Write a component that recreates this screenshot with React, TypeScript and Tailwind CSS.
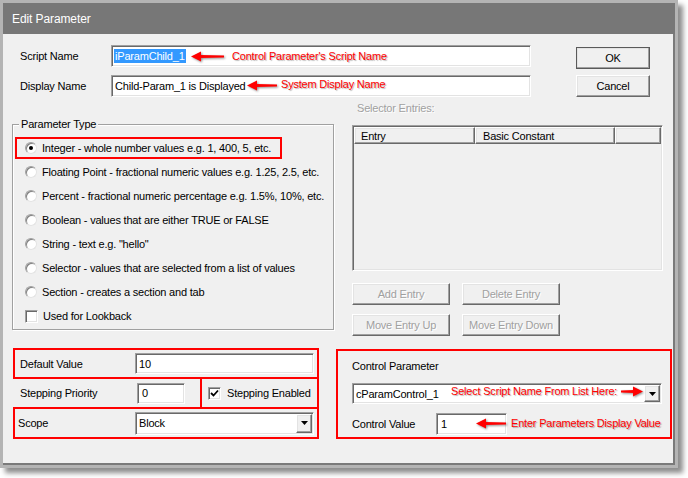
import React from 'react';

const sunken =
  'bg-white border border-t-[#a0a0a0] border-l-[#a0a0a0] border-r-white border-b-white shadow-[inset_1px_1px_0_#696969,inset_-1px_-1px_0_#e3e3e3]';
const raised =
  'bg-[#f0f0f0] border border-t-white border-l-white border-r-[#696969] border-b-[#696969] shadow-[inset_-1px_-1px_0_#a0a0a0,inset_1px_1px_0_#e3e3e3]';

function Arrow({ width, dir }: { width: number; dir: 'left' | 'right' }) {
  const h = 11;
  const pts =
    dir === 'left'
      ? `0,${h / 2} 10,0.5 10,${h - 0.5}`
      : `${width},${h / 2} ${width - 10},0.5 ${width - 10},${h - 0.5}`;
  const shaft =
    dir === 'left'
      ? `9,4 ${width},4.6 ${width},6.4 9,7`
      : `${width - 9},4 0,4.6 0,6.4 ${width - 9},7`;
  return (
    <svg width={width} height={h} className="drop-shadow-[1px_1px_1px_rgba(0,0,0,0.45)]">
      <polygon points={pts} fill="#ff0000" />
      <polygon points={shaft} fill="#ff0000" />
    </svg>
  );
}

function Radio({ checked }: { checked?: boolean }) {
  return (
    <span className="w-[12px] h-[12px] rounded-full bg-white border border-t-[#a0a0a0] border-l-[#a0a0a0] border-r-[#e3e3e3] border-b-[#e3e3e3] shadow-[inset_1px_1px_0_#808080] flex items-center justify-center shrink-0">
      {checked && <span className="w-[4px] h-[4px] rounded-full bg-black" />}
    </span>
  );
}

function Check({ checked }: { checked?: boolean }) {
  return (
    <span className={`w-[13px] h-[13px] shrink-0 flex items-center justify-center ${sunken}`}>
      {checked && (
        <svg width="9" height="9" viewBox="0 0 9 9">
          <path d="M1 4 L3.5 6.5 L8 1.5" stroke="#000" strokeWidth="1.8" fill="none" />
        </svg>
      )}
    </span>
  );
}

function DropButton() {
  return (
    <span className={`w-[16px] h-full shrink-0 flex items-center justify-center ${raised}`}>
      <svg width="7" height="4" viewBox="0 0 7 4">
        <polygon points="0,0 7,0 3.5,4" fill="#000" />
      </svg>
    </span>
  );
}

const types = [
  'Integer - whole number values e.g. 1, 400, 5, etc.',
  'Floating Point - fractional numeric values e.g. 1.25, 2.5, etc.',
  'Percent - fractional numeric percentage e.g. 1.5%, 10%, etc.',
  'Boolean - values that are either TRUE or FALSE',
  'String - text e.g. "hello"',
  'Selector - values that are selected from a list of values',
  'Section - creates a section and tab',
];

const redText =
  'absolute whitespace-nowrap text-[#ff0000] leading-[14px] [text-shadow:1px_1px_1px_rgba(0,0,0,0.3)]';
const disabledBtn = `w-[98px] h-[22px] flex items-center justify-center text-[#a0a0a0] [text-shadow:1px_1px_0_#ffffff] ${raised}`;

export default function App() {
  return (
    <div className="relative w-[688px] h-[478px] bg-white font-['Liberation_Sans',Arial,sans-serif] text-[11px] tracking-[-0.2px] text-black leading-[14px] whitespace-nowrap">
      <div className="w-[678px] h-[468px] border-[3px] border-[#b4b4b4] flex flex-col shadow-[5px_5px_5px_rgba(0,0,0,0.45)]">
        <div className="h-[31px] shrink-0 bg-[#777777] text-white text-[12px] tracking-[-0.1px] pl-[9px] flex items-center">
          Edit Parameter
        </div>
        <div className="flex-1 bg-[#f0f0f0] border-r-2 border-b-2 border-[#7a7a7a] flex flex-col">
          {/* names + OK/Cancel */}
          <div className="flex pt-[11px]">
            <div className="flex flex-col gap-[8px] pl-[17px]">
              <div className="flex items-center h-[22px]">
                <span className="w-[91px]">Script Name</span>
                <div className={`w-[420px] h-[22px] flex items-center pl-[2px] ${sunken}`}>
                  <span className="bg-[#3399ff] text-white px-px">iParamChild_1</span>
                </div>
              </div>
              <div className="flex items-center h-[22px]">
                <span className="w-[91px]">Display Name</span>
                <div className={`w-[420px] h-[22px] flex items-center pl-[3px] ${sunken}`}>
                  Child-Param_1 is Displayed
                </div>
              </div>
            </div>
            <div className="flex flex-col gap-[6px] ml-[45px] mt-[2px]">
              <div className="w-[74px] h-[22px] outline outline-1 outline-[#5a5a5a] -outline-offset-1">
                <div className={`w-full h-full flex items-center justify-center ${raised}`}>OK</div>
              </div>
              <div className={`w-[74px] h-[22px] flex items-center justify-center ${raised}`}>Cancel</div>
            </div>
          </div>

          {/* parameter type + selector entries */}
          <div className="flex">
            <div className="relative ml-[9px] mt-[27px] w-[322px] h-[206px] border border-[#a0a0a0] shadow-[inset_1px_1px_0_#ffffff,1px_1px_0_#ffffff] pt-[11px]">
              <span className="absolute -top-[8px] left-[6px] px-[2px] bg-[#f0f0f0]">Parameter Type</span>
              {types.map((t, i) =>
                i === 0 ? (
                  <div key={t} className="h-[24px] flex items-center">
                    <div className="ml-[2px] w-[267px] h-[22px] border-2 border-[#ff0000] flex items-center pl-[8px] gap-[5px]">
                      <Radio checked />
                      <span>{t}</span>
                    </div>
                  </div>
                ) : (
                  <div key={t} className="h-[24px] flex items-center pl-[12px] gap-[5px]">
                    <Radio />
                    <span>{t}</span>
                  </div>
                )
              )}
              <div className="h-[24px] flex items-center pl-[12px] gap-[5px]">
                <Check />
                <span>Used for Lookback</span>
              </div>
            </div>

            <div className="ml-[18px] w-[311px] flex flex-col">
              <div className="mt-[4px] pl-[5px] text-[#a0a0a0] [text-shadow:1px_1px_0_#ffffff]">Selector Entries:</div>
              <div className="mt-[10px] h-[146px] border border-t-[#a0a0a0] border-l-[#a0a0a0] border-r-white border-b-white shadow-[inset_1px_1px_0_#696969,inset_-1px_-1px_0_#e3e3e3] p-[1px] bg-[#f0f0f0]">
                <div className="flex h-[17px]">
                  <div className={`w-[121px] h-full flex items-center pl-[6px] ${raised}`}>Entry</div>
                  <div className={`w-[140px] h-full flex items-center pl-[7px] ${raised}`}>Basic Constant</div>
                  <div className={`flex-1 h-full ${raised}`} />
                </div>
              </div>
              <div className="flex gap-[12px] mt-[12px]">
                <div className={disabledBtn}>Add Entry</div>
                <div className={disabledBtn}>Delete Entry</div>
              </div>
              <div className="flex gap-[12px] mt-[9px]">
                <div className={disabledBtn}>Move Entry Up</div>
                <div className={disabledBtn}>Move Entry Down</div>
              </div>
            </div>
          </div>

          {/* bottom */}
          <div className="flex mt-[12px]">
            <div className="ml-[10px] w-[306px] flex flex-col">
              <div className="h-[31px] border-2 border-[#ff0000] flex items-center pl-[5px]">
                <span className="w-[115px]">Default Value</span>
                <div className={`w-[179px] h-[21px] flex items-center pl-[3px] ${sunken}`}>10</div>
              </div>
              <div className="h-[28px] flex">
                <div className="flex items-center pl-[7px]">
                  <span className="w-[117px]">Stepping Priority</span>
                  <div className={`w-[48px] h-[21px] flex items-center pl-[4px] ${sunken}`}>0</div>
                </div>
                <div className="ml-[15px] w-[119px] h-full border-x-2 border-[#ff0000] flex items-center pl-[6px] gap-[6px]">
                  <Check checked />
                  <span>Stepping Enabled</span>
                </div>
              </div>
              <div className="h-[32px] border-2 border-[#ff0000] flex items-center pl-[3px]">
                <span className="w-[117px]">Scope</span>
                <div className={`w-[179px] h-[23px] flex items-center pl-[3px] pr-[1px] py-[1px] ${sunken}`}>
                  <span className="flex-1">Block</span>
                  <DropButton />
                </div>
              </div>
            </div>

            <div className="ml-[17px] mt-[1px] w-[336px] h-[90px] border-2 border-[#ff0000] flex flex-col pl-[14px] pt-[8px]">
              <div>Control Parameter</div>
              <div className={`mt-[10px] w-[310px] h-[21px] flex items-center pl-[3px] pr-[1px] py-[1px] ${sunken}`}>
                <span className="flex-1">cParamControl_1</span>
                <DropButton />
              </div>
              <div className="mt-[9px] flex items-center h-[22px]">
                <span className="w-[84px]">Control Value</span>
                <div className={`w-[71px] h-[22px] flex items-center pl-[4px] ${sunken}`}>1</div>
              </div>
            </div>
          </div>
        </div>
      </div>

      {/* annotations */}
      <div className="absolute left-[191px] top-[51px]"><Arrow width={33} dir="left" /></div>
      <span className={`${redText} left-[232px] top-[49px]`}>Control Parameter's Script Name</span>
      <div className="absolute left-[247px] top-[80px]"><Arrow width={30} dir="left" /></div>
      <span className={`${redText} left-[281px] top-[77px]`}>System Display Name</span>
      <span className={`${redText} left-[451px] top-[384px]`}>Select Script Name From List Here:</span>
      <div className="absolute left-[621px] top-[386px]"><Arrow width={22} dir="right" /></div>
      <div className="absolute left-[476px] top-[418px]"><Arrow width={30} dir="left" /></div>
      <span className={`${redText} left-[511px] top-[416px]`}>Enter Parameters Display Value</span>
    </div>
  );
}
